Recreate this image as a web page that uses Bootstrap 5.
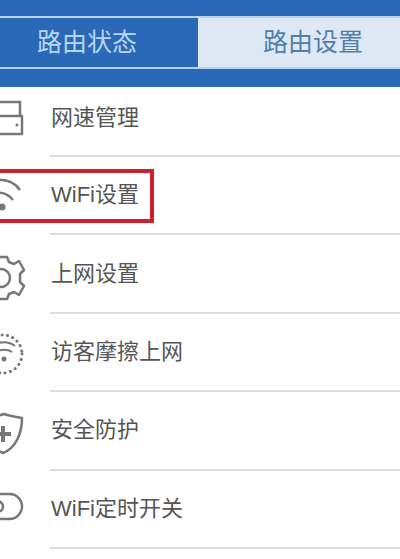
<!DOCTYPE html>
<html lang="zh-CN">
<head>
    <meta charset="UTF-8">
    <meta name="viewport" content="width=device-width, initial-scale=1">
    <title>路由设置</title>
    <link href="https://cdn.jsdelivr.net/npm/bootstrap@5.3.3/dist/css/bootstrap.min.css" rel="stylesheet">
    <style>
        body {
            background: #fff;
            overflow: hidden;
            font-family: "Liberation Sans", "Noto Sans CJK SC", sans-serif;
        }
        .top-band {
            background: #2a69b8;
            height: 87px;
            padding-top: 16px;
        }
        .tab-group {
            height: 53px;
            border-top: 2px solid #b9d3ee;
            border-bottom: 2px solid #b9d3ee;
        }
        .tab-item {
            font-size: 25px;
            line-height: 1;
        }
        .tab-on {
            width: 198px;
            padding-left: 37px;
            color: #b7d8f4;
        }
        .tab-off {
            padding-left: 65px;
            background: #dfe9f5;
            color: #4f7eae;
        }
        .menu-row {
            height: 78.4px;
            padding: 0 0 0 50px;
            border: 0;
            background: transparent;
        }
        .menu-row:first-child {
            height: 70px;
        }
        .menu-row:first-child .menu-rule {
            padding-bottom: 8px;
        }
        .menu-rule {
            height: 100%;
            border-bottom: 2px solid #dddddd;
            font-size: 22px;
            color: #555;
            padding-bottom: 1px;
            padding-left: 1px;
        }
        .menu-icon {
            position: absolute;
            left: 0;
            top: 0;
            width: 50px;
            height: 78px;
            fill: none;
            stroke: #777;
            stroke-width: 2.5;
            stroke-linejoin: round;
        }
        .red-box {
            position: absolute;
            left: 0;
            top: 12px;
            width: 154px;
            height: 54px;
            border: 4px solid #d0202f;
            border-left: 0;
        }
    </style>
</head>
<body>
    <div class="top-band">
        <div class="tab-group d-flex">
            <div class="tab-item tab-on d-flex align-items-center">路由状态</div>
            <div class="tab-item tab-off flex-grow-1 d-flex align-items-center">路由设置</div>
        </div>
    </div>

    <ul class="list-group list-group-flush">
        <li class="list-group-item menu-row">
            <svg class="menu-icon" viewBox="0 0 50 78">
                <path d="M-2 15H20V29M-2 29H22V47H-2"/>
                <path d="M17 38h0" stroke-linecap="round" stroke-width="3"/>
            </svg>
            <div class="menu-rule d-flex align-items-center">网速管理</div>
        </li>
        <li class="list-group-item menu-row">
            <svg class="menu-icon" viewBox="0 0 50 78">
                <circle cx="2" cy="50" r="3.5" fill="#777" stroke="none"/>
                <path d="M-4 36C3 35 9 38 13 43M-4 23C7 22 15 26 20 33"/>
            </svg>
            <div class="menu-rule d-flex align-items-center">WiFi设置</div>
            <div class="red-box"></div>
        </li>
        <li class="list-group-item menu-row">
            <svg class="menu-icon" viewBox="0 0 50 78">
                <circle cx="1" cy="43" r="9"/>
                <path d="M-6 22H7L9 27L14 29L19 26L24 35L20 39V47L24 51L19 60L14 57L9 59L7 64H-6"/>
            </svg>
            <div class="menu-rule d-flex align-items-center">上网设置</div>
        </li>
        <li class="list-group-item menu-row">
            <svg class="menu-icon" viewBox="0 0 50 78">
                <circle cx="3" cy="40" r="19" stroke-width="3" stroke-dasharray="0.1 5.4" stroke-linecap="round"/>
                <circle cx="4" cy="45" r="2.5" fill="#777" stroke="none"/>
                <path d="M-4 38C0 35 8 35 12 38M-7 32C-1 27 9 27 15 32" stroke-width="2"/>
            </svg>
            <div class="menu-rule d-flex align-items-center">访客摩擦上网</div>
        </li>
        <li class="list-group-item menu-row">
            <svg class="menu-icon" viewBox="0 0 50 78">
                <path d="M-8 24C-2 24 1 23 4 22C10 24 16 25 22 26C22 41 16 56 3 61C-2 59 -8 55 -10 49"/>
                <path d="M3 34V50M-6 42H11" stroke-width="4"/>
            </svg>
            <div class="menu-rule d-flex align-items-center">安全防护</div>
        </li>
        <li class="list-group-item menu-row">
            <svg class="menu-icon" viewBox="0 0 50 78">
                <rect x="-22" y="23" width="44" height="25" rx="12.500"/>
                <circle cx="-2" cy="35.500" r="5"/>
            </svg>
            <div class="menu-rule d-flex align-items-center">WiFi定时开关</div>
        </li>
    </ul>
</body>
</html>
